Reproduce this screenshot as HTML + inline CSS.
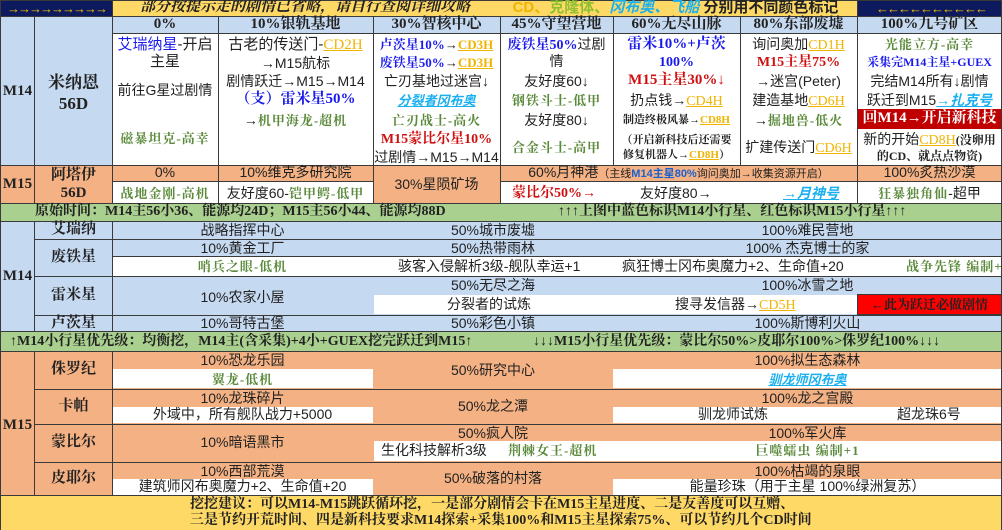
<!DOCTYPE html>
<html><head><meta charset="utf-8"><style>
*{margin:0;padding:0;box-sizing:border-box}
body{width:1002px;height:530px;overflow:hidden;background:#fff;position:relative;font-family:"Liberation Sans","Noto Sans CJK SC",sans-serif;font-size:14px;color:#222}
.c{position:absolute;border:1px solid #3a3a3a;}
.t{position:absolute;white-space:nowrap;line-height:17px;text-align:center}
.b{font-family:"Liberation Serif","Noto Serif CJK SC",serif;font-weight:bold}
.bl{color:#1a1aee}.rd{color:#d01010}.gr{color:#5a8a3a;font-family:"Liberation Serif","Noto Serif CJK SC",serif;font-weight:bold;letter-spacing:1px;font-size:13px}
.cd{color:#f0b400;text-decoration:underline;font-family:"Liberation Serif",serif}
.cy{color:#1ab0f0;font-style:italic;text-decoration:underline;font-weight:bold}
.blue{background:#c5d9f1}.sal{background:#f4b183}.grn{background:#a9d08e}.yel{background:#ffd966}.nav{background:#0e1a5e}
.h{font-size:15px}
</style></head><body>
<!-- top row -->
<div class="c nav" style="left:0;top:0;width:113px;height:17px"></div>
<div class="t" style="left:4px;top:0;width:105px;color:#f0c000;font-size:13px;letter-spacing:-2px;font-weight:bold">→→→→→→→→→</div>
<div class="c yel" style="left:112px;top:0;width:746px;height:17px"></div>
<div class="t b" style="left:120px;top:-1px;width:370px;font-style:italic;font-size:15px">部分按提示走的剧情已省略，请自行查阅详细攻略</div>
<div class="t" style="left:503px;top:-1px;width:345px;font-size:15px;font-weight:bold"><span style="color:#f0b400">CD、</span><span style="color:#8cc030">克隆体、</span><span style="color:#1ab0f0;font-style:italic">冈布奥、飞船</span> 分别用不同颜色标记</div>
<div class="c nav" style="left:857px;top:0;width:145px;height:17px"></div>
<div class="t" style="left:862px;top:0;width:138px;color:#f0c000;font-size:13px;letter-spacing:-2px;font-weight:bold">←←←←←←←←←←</div>

<!-- M14 top block -->
<div class="c blue" style="left:0;top:16px;width:35px;height:150px"></div>
<div class="t b" style="left:0;top:83px;width:35px;font-size:15px">M14</div>
<div class="c blue" style="left:34px;top:16px;width:79px;height:150px"></div>
<div class="t b" style="left:34px;top:72px;width:79px;font-size:17px;line-height:21px">米纳恩<br>56D</div>
<div class="c blue" style="left:112px;top:16px;width:107px;height:18px"></div>
<div class="c blue" style="left:218px;top:16px;width:156px;height:18px"></div>
<div class="c blue" style="left:373px;top:16px;width:128px;height:18px"></div>
<div class="c blue" style="left:500px;top:16px;width:114px;height:18px"></div>
<div class="c blue" style="left:613px;top:16px;width:128px;height:18px"></div>
<div class="c blue" style="left:740px;top:16px;width:118px;height:18px"></div>
<div class="c blue" style="left:857px;top:16px;width:145px;height:18px"></div>
<div class="t b h" style="left:112px;top:16px;width:106px">0%</div>
<div class="t b h" style="left:218px;top:16px;width:155px">10%银轨基地</div>
<div class="t b h" style="left:373px;top:16px;width:127px">30%智核中心</div>
<div class="t b h" style="left:500px;top:16px;width:113px">45%守望营地</div>
<div class="t b h" style="left:613px;top:16px;width:127px">60%无尽山脉</div>
<div class="t b h" style="left:740px;top:16px;width:117px">80%东部废墟</div>
<div class="t b h" style="left:857px;top:16px;width:145px">100%九号矿区</div>
<div class="c" style="left:112px;top:33px;width:107px;height:133px"></div>
<div class="c" style="left:218px;top:33px;width:156px;height:133px"></div>
<div class="c" style="left:373px;top:33px;width:128px;height:133px"></div>
<div class="c" style="left:500px;top:33px;width:114px;height:133px"></div>
<div class="c" style="left:613px;top:33px;width:128px;height:133px"></div>
<div class="c" style="left:740px;top:33px;width:118px;height:133px"></div>
<div class="c" style="left:857px;top:33px;width:145px;height:133px"></div>
<!-- col 0% -->
<div class="t" style="left:112px;top:36px;width:106px;font-size:15px"><span class="bl">艾瑞纳星</span>-开启</div>
<div class="t" style="left:112px;top:53px;width:106px;font-size:15px">主星</div>
<div class="t" style="left:112px;top:82px;width:106px">前往G星过剧情</div>
<div class="t gr" style="left:112px;top:130px;width:106px">磁暴坦克-高幸</div>
<!-- col 10% -->
<div class="t" style="left:218px;top:36px;width:155px;font-size:15px">古老的传送门-<span class="cd">CD2H</span></div>
<div class="t" style="left:218px;top:55px;width:155px">→M15航标</div>
<div class="t" style="left:218px;top:73px;width:155px">剧情跃迁→M15→M14</div>
<div class="t b bl" style="left:218px;top:91px;width:155px;font-size:15px">（支）雷米星50%</div>
<div class="t" style="left:218px;top:112px;width:155px">→<span class="gr">机甲海龙-超机</span></div>
<!-- col 30% -->
<div class="t b" style="left:373px;top:36px;width:127px;font-size:13px"><span class="bl">卢茨星10%</span>→<span class="cd">CD3H</span></div>
<div class="t b" style="left:373px;top:54px;width:127px;font-size:13px"><span class="bl">废铁星50%</span>→<span class="cd">CD3H</span></div>
<div class="t" style="left:373px;top:73px;width:127px">亡刃基地过迷宫↓</div>
<div class="t cy" style="left:373px;top:92px;width:127px;font-size:13px">分裂者冈布奥</div>
<div class="t gr" style="left:373px;top:112px;width:127px">亡刃战士-高火</div>
<div class="t b rd" style="left:373px;top:131px;width:127px">M15蒙比尔星10%</div>
<div class="t" style="left:373px;top:149px;width:127px">过剧情→M15→M14</div>
<!-- col 45% -->
<div class="t" style="left:500px;top:36px;width:113px"><span class="bl b">废铁星50%</span>过剧</div>
<div class="t" style="left:500px;top:53px;width:113px">情</div>
<div class="t" style="left:500px;top:73px;width:113px">友好度60↓</div>
<div class="t gr" style="left:500px;top:92px;width:113px">钢铁斗士-低甲</div>
<div class="t" style="left:500px;top:112px;width:113px">友好度80↓</div>
<div class="t gr" style="left:500px;top:139px;width:113px">合金斗士-高甲</div>
<!-- col 60% -->
<div class="t b bl" style="left:613px;top:36px;width:127px;font-size:15px">雷米10%+卢茨</div>
<div class="t b bl" style="left:613px;top:54px;width:127px">100%</div>
<div class="t b rd" style="left:613px;top:72px;width:127px;font-size:15px">M15主星30%↓</div>
<div class="t" style="left:613px;top:92px;width:127px">扔点钱→<span class="cd">CD4H</span></div>
<div class="t b" style="left:613px;top:112px;width:127px;font-size:11px">制造终极风暴→<span class="cd">CD8H</span></div>
<div class="t b" style="left:613px;top:133px;width:127px;font-size:11px;line-height:15px">（开启新科技后还需要<br>修复机器人→<span class="cd">CD8H</span>）</div>
<!-- col 80% -->
<div class="t" style="left:740px;top:36px;width:117px">询问奥加<span class="cd">CD1H</span></div>
<div class="t b rd" style="left:740px;top:54px;width:117px">M15主星75%</div>
<div class="t" style="left:740px;top:73px;width:117px">→迷宫(Peter)</div>
<div class="t" style="left:740px;top:92px;width:117px">建造基地<span class="cd">CD6H</span></div>
<div class="t" style="left:740px;top:112px;width:117px">→<span class="gr">掘地兽-低火</span></div>
<div class="t" style="left:740px;top:139px;width:117px">扩建传送门<span class="cd">CD6H</span></div>
<!-- col 100% -->
<div class="t gr" style="left:857px;top:36px;width:145px">光能立方-高幸</div>
<div class="t b bl" style="left:857px;top:54px;width:145px;font-size:12px">采集完M14主星+GUEX</div>
<div class="t" style="left:857px;top:73px;width:145px">完结M14所有↓剧情</div>
<div class="t" style="left:857px;top:92px;width:145px">跃迁到M15<span class="cy">→扎克号</span></div>
<div style="position:absolute;left:858px;top:109px;width:143px;height:20px;background:#c00000"></div>
<div class="t b" style="left:857px;top:110px;width:145px;color:#fff;font-size:15px">回M14→开启新科技</div>
<div class="t" style="left:857px;top:131px;width:145px">新的开始<span class="cd">CD8H</span><span class="b" style="font-size:12px">(没卵用</span></div>
<div class="t b" style="left:857px;top:148px;width:145px;font-size:12px">的CD、就点点物资)</div>

<!-- M15 row -->
<div class="c sal" style="left:0;top:165px;width:35px;height:39px"></div>
<div class="t b" style="left:0;top:176px;width:35px;font-size:15px">M15</div>
<div class="c sal" style="left:34px;top:165px;width:79px;height:39px"></div>
<div class="t b" style="left:34px;top:166px;width:79px;font-size:15px;line-height:18px">阿塔伊<br>56D</div>
<div class="c sal" style="left:112px;top:165px;width:107px;height:17px"></div>
<div class="c" style="left:112px;top:181px;width:107px;height:23px"></div>
<div class="t" style="left:112px;top:164px;width:106px">0%</div>
<div class="t gr" style="left:112px;top:185px;width:106px">战地金刚-高机</div>
<div class="c sal" style="left:218px;top:165px;width:156px;height:17px"></div>
<div class="c" style="left:218px;top:181px;width:156px;height:23px"></div>
<div class="t" style="left:218px;top:164px;width:155px">10%维克多研究院</div>
<div class="t" style="left:218px;top:185px;width:155px">友好度60-<span class="gr">铠甲鳄-低甲</span></div>
<div class="c sal" style="left:373px;top:165px;width:128px;height:39px"></div>
<div class="t" style="left:373px;top:176px;width:127px">30%星陨矿场</div>
<div class="c sal" style="left:500px;top:165px;width:358px;height:17px"></div>
<div class="c" style="left:500px;top:181px;width:358px;height:23px;border-top:none"></div>
<div class="t" style="left:500px;top:164px;width:357px">60%月神港<span style="font-size:11px">（主线<b style="color:#1a60d0">M14主星80%</b>询问奥加→收集资源开启）</span></div>
<div class="t b rd" style="left:512px;top:185px">蒙比尔50%→</div>
<div class="t" style="left:640px;top:185px">友好度80→</div>
<div class="t cy" style="left:783px;top:185px">→月神号</div>
<div class="c sal" style="left:857px;top:165px;width:145px;height:17px"></div>
<div class="c" style="left:857px;top:181px;width:145px;height:23px"></div>
<div class="t" style="left:857px;top:164px;width:145px">100%炙热沙漠</div>
<div class="t" style="left:857px;top:185px;width:145px"><span class="gr">狂暴独角仙</span>-超甲</div>

<!-- green bar 1 -->
<div class="c grn" style="left:0;top:203px;width:1002px;height:19px"></div>
<div class="t b" style="left:35px;top:203px;font-size:14px">原始时间：M14主56小36、能源均24D；M15主56小44、能源均88D</div>
<div class="t b" style="left:558px;top:203px;font-size:14px">↑↑↑上图中蓝色标识M14小行星、红色标识M15小行星↑↑↑</div>

<!-- M14 section -->
<div class="c blue" style="left:0;top:221px;width:35px;height:111px"></div>
<div class="t b" style="left:0;top:268px;width:35px;font-size:15px">M14</div>
<div class="c blue" style="left:34px;top:221px;width:79px;height:19px"></div>
<div class="t b" style="left:34px;top:221px;width:79px;font-size:15px">艾瑞纳</div>
<div class="c blue" style="left:34px;top:239px;width:79px;height:38px"></div>
<div class="t b" style="left:34px;top:249px;width:79px;font-size:15px">废铁星</div>
<div class="c blue" style="left:34px;top:276px;width:79px;height:40px"></div>
<div class="t b" style="left:34px;top:287px;width:79px;font-size:15px">雷米星</div>
<div class="c blue" style="left:34px;top:315px;width:79px;height:17px"></div>
<div class="t b" style="left:34px;top:315px;width:79px;font-size:15px">卢茨星</div>
<div class="c blue" style="left:112px;top:221px;width:890px;height:19px"></div>
<div class="t" style="left:112px;top:222px;width:261px">战略指挥中心</div>
<div class="t" style="left:373px;top:222px;width:240px">50%城市废墟</div>
<div class="t" style="left:613px;top:222px;width:389px">100%难民营地</div>
<div class="c blue" style="left:112px;top:239px;width:890px;height:18px"></div>
<div class="t" style="left:112px;top:240px;width:261px">10%黄金工厂</div>
<div class="t" style="left:373px;top:240px;width:240px">50%热带雨林</div>
<div class="t" style="left:613px;top:240px;width:389px">100% 杰克博士的家</div>
<div class="c" style="left:112px;top:256px;width:890px;height:21px"></div>
<div class="t gr" style="left:112px;top:258px;width:261px">哨兵之眼-低机</div>
<div class="t" style="left:398px;top:258px">骇客入侵解析3级-舰队幸运+1</div>
<div class="t" style="left:622px;top:258px">疯狂博士冈布奥魔力+2、生命值+20</div>
<div class="t gr" style="left:906px;top:258px">战争先锋 编制+1</div>
<div class="c blue" style="left:112px;top:276px;width:890px;height:40px"></div>
<div class="t" style="left:112px;top:289px;width:261px">10%农家小屋</div>
<div class="t" style="left:373px;top:277px;width:240px">50%无尽之海</div>
<div class="t" style="left:613px;top:277px;width:389px">100%冰雪之地</div>
<div style="position:absolute;left:374px;top:295px;width:483px;height:19px;background:#fff"></div>
<div class="t" style="left:447px;top:296px">分裂者的试炼</div>
<div class="t" style="left:675px;top:296px">搜寻发信器→<span class="cd">CD5H</span></div>
<div style="position:absolute;left:857px;top:294px;width:145px;height:21px;background:#ff0000;border:1px solid #3a3a3a"></div>
<div class="t b" style="left:857px;top:296px;width:145px;font-size:13px">←此为跃迁必做剧情</div>
<div class="c blue" style="left:112px;top:315px;width:890px;height:17px"></div>
<div class="t" style="left:112px;top:315px;width:261px">10%哥特古堡</div>
<div class="t" style="left:373px;top:315px;width:240px">50%彩色小镇</div>
<div class="t" style="left:613px;top:315px;width:389px">100%斯博利火山</div>

<!-- green bar 2 -->
<div class="c grn" style="left:0;top:331px;width:1002px;height:21px"></div>
<div class="t b" style="left:10px;top:333px;font-size:14px">↑M14小行星优先级：均衡挖，M14主(含采集)+4小+GUEX挖完跃迁到M15↑</div>
<div class="t b" style="left:533px;top:333px;font-size:14px">↓↓↓M15小行星优先级：蒙比尔50%&gt;皮耶尔100%&gt;侏罗纪100%↓↓↓</div>

<!-- M15 section -->
<div class="c sal" style="left:0;top:351px;width:35px;height:145px"></div>
<div class="t b" style="left:0;top:417px;width:35px;font-size:15px">M15</div>
<div class="c sal" style="left:34px;top:351px;width:79px;height:39px"></div>
<div class="t b" style="left:34px;top:361px;width:79px;font-size:15px">侏罗纪</div>
<div class="c sal" style="left:34px;top:389px;width:79px;height:36px"></div>
<div class="t b" style="left:34px;top:398px;width:79px;font-size:15px">卡帕</div>
<div class="c sal" style="left:34px;top:424px;width:79px;height:39px"></div>
<div class="t b" style="left:34px;top:434px;width:79px;font-size:15px">蒙比尔</div>
<div class="c sal" style="left:34px;top:462px;width:79px;height:34px"></div>
<div class="t b" style="left:34px;top:470px;width:79px;font-size:15px">皮耶尔</div>

<div class="c sal" style="left:112px;top:351px;width:890px;height:39px"></div>
<div style="position:absolute;left:113px;top:369px;width:260px;height:19px;background:#fff"></div>
<div style="position:absolute;left:613px;top:369px;width:388px;height:19px;background:#fff"></div>
<div class="t" style="left:112px;top:352px;width:261px">10%恐龙乐园</div>
<div class="t gr" style="left:112px;top:371px;width:261px">翼龙-低机</div>
<div class="t" style="left:373px;top:362px;width:240px">50%研究中心</div>
<div class="t" style="left:613px;top:352px;width:389px">100%拟生态森林</div>
<div class="t cy" style="left:613px;top:371px;width:389px;font-size:13px">驯龙师冈布奥</div>

<div class="c sal" style="left:112px;top:389px;width:890px;height:36px"></div>
<div style="position:absolute;left:113px;top:407px;width:260px;height:16px;background:#fff"></div>
<div style="position:absolute;left:613px;top:407px;width:388px;height:16px;background:#fff"></div>
<div class="t" style="left:112px;top:390px;width:261px">10%龙珠碎片</div>
<div class="t" style="left:112px;top:406px;width:261px">外域中，所有舰队战力+5000</div>
<div class="t" style="left:373px;top:398px;width:240px">50%龙之潭</div>
<div class="t" style="left:613px;top:390px;width:389px">100%龙之宫殿</div>
<div class="t" style="left:698px;top:406px">驯龙师试炼</div>
<div class="t" style="left:897px;top:406px">超龙珠6号</div>

<div class="c sal" style="left:112px;top:424px;width:890px;height:39px"></div>
<div style="position:absolute;left:374px;top:441px;width:627px;height:20px;background:#fff"></div>
<div class="t" style="left:112px;top:434px;width:261px">10%暗语黑市</div>
<div class="t" style="left:373px;top:425px;width:240px">50%疯人院</div>
<div class="t" style="left:381px;top:442px">生化科技解析3级</div>
<div class="t gr" style="left:508px;top:442px">荆棘女王-超机</div>
<div class="t" style="left:613px;top:425px;width:389px">100%军火库</div>
<div class="t gr" style="left:613px;top:442px;width:389px">巨噬蠕虫 编制+1</div>

<div class="c sal" style="left:112px;top:462px;width:890px;height:34px"></div>
<div style="position:absolute;left:113px;top:479px;width:260px;height:16px;background:#fff"></div>
<div style="position:absolute;left:613px;top:479px;width:388px;height:16px;background:#fff"></div>
<div class="t" style="left:112px;top:463px;width:261px">10%西部荒漠</div>
<div class="t" style="left:112px;top:478px;width:261px">建筑师冈布奥魔力+2、生命值+20</div>
<div class="t" style="left:373px;top:470px;width:240px">50%破落的村落</div>
<div class="t" style="left:613px;top:463px;width:389px">100%枯竭的泉眼</div>
<div class="t" style="left:613px;top:478px;width:389px">能量珍珠（用于主星 100%绿洲复苏）</div>

<!-- bottom yellow -->
<div class="c yel" style="left:0;top:495px;width:1002px;height:35px;border-bottom:none"></div>
<div class="t b" style="left:190px;top:496px;font-size:14px;text-align:left">挖挖建议：可以M14-M15跳跃循环挖，一是部分剧情会卡在M15主星进度、二是友善度可以互赠、</div>
<div class="t b" style="left:190px;top:512px;font-size:14px;text-align:left">三是节约开荒时间、四是新科技要求M14探索+采集100%和M15主星探索75%、可以节约几个CD时间</div>
</body></html>
